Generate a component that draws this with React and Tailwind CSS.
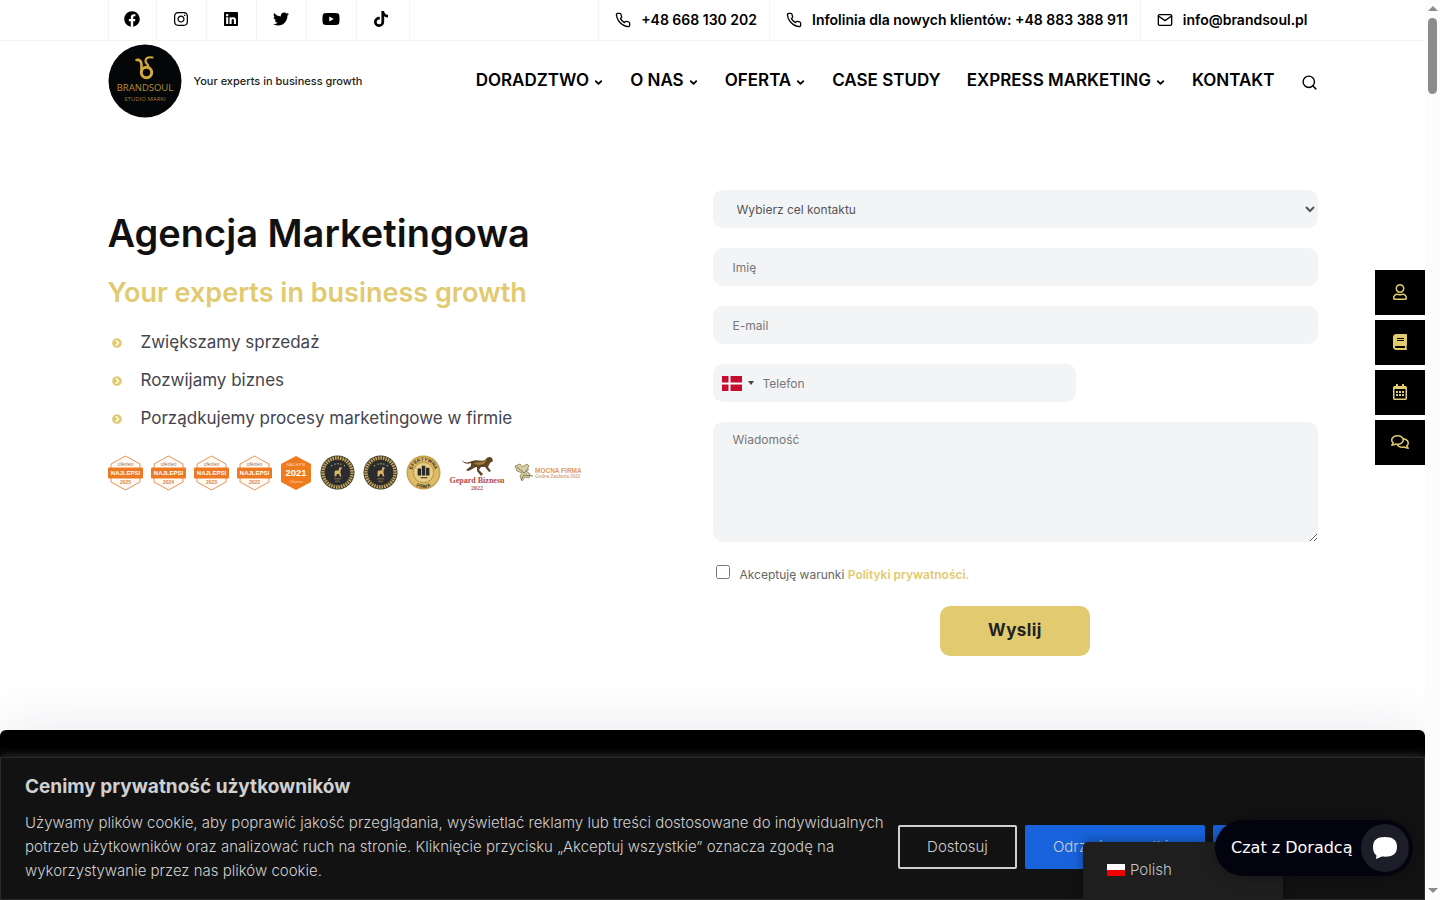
import React from 'react';
import { FaBook, FaChevronCircleRight, FaFacebook, FaInstagram, FaLinkedin, FaRegCalendarAlt, FaRegComments, FaRegUser, FaTiktok, FaTwitter, FaYoutube } from 'react-icons/fa';
import { FiChevronDown, FiMail, FiPhone, FiSearch } from 'react-icons/fi';

const socials = [
    { name: 'Facebook', icon: FaFacebook },
    { name: 'Instagram', icon: FaInstagram },
    { name: 'LinkedIn', icon: FaLinkedin },
    { name: 'Twitter', icon: FaTwitter },
    { name: 'YouTube', icon: FaYoutube },
    { name: 'TikTok', icon: FaTiktok },
];

const contacts = [
    { icon: FiPhone, text: '+48 668 130 202', href: 'tel:+48668130202' },
    { icon: FiPhone, text: 'Infolinia dla nowych klientów: +48 883 388 911', href: 'tel:+48883388911' },
    { icon: FiMail, text: 'info@brandsoul.pl', href: 'mailto:info@brandsoul.pl' },
];

const navItems = [
    { label: 'DORADZTWO', sub: true },
    { label: 'O NAS', sub: true },
    { label: 'OFERTA', sub: true },
    { label: 'CASE STUDY', sub: false },
    { label: 'EXPRESS MARKETING', sub: true },
    { label: 'KONTAKT', sub: false },
];

const benefits = ['Zwiększamy sprzedaż', 'Rozwijamy biznes', 'Porządkujemy procesy marketingowe w firmie'];

const sideLinks = [
    { name: 'Konto', icon: FaRegUser },
    { name: 'Blog', icon: FaBook },
    { name: 'Kalendarz', icon: FaRegCalendarAlt },
    { name: 'Kontakt', icon: FaRegComments },
];

const field = 'w-full rounded-[10px] bg-[#f3f4f6] text-xs text-[#555] placeholder:text-[#777] outline-none';

const Logo = () => (
    <svg viewBox="0 0 74 74" className="size-[74px] shrink-0" aria-label="Brandsoul Studio Marki">
        <circle cx="37" cy="37" r="36.500" fill="#040607" />
        <g fill="none" stroke="#d3a83f" strokeLinecap="round">
            <circle cx="38.500" cy="28.500" r="5.200" strokeWidth="3" />
            <path d="M28.500 16c3.500-.5 5 1.500 5 5v7" strokeWidth="2.600" />
            <path d="M44.500 13.500c-5-1-7 1-7 3.500s3 3 3 6" strokeWidth="2.200" />
        </g>
        <text x="37" y="47" textAnchor="middle" fontSize="9.500" fill="#b58f3a" fontFamily="Open Sans, sans-serif">BRANDSOUL</text>
        <text x="37" y="57" textAnchor="middle" fontSize="6" fill="#a07e33" fontFamily="Open Sans, sans-serif">STUDIO MARKI</text>
    </svg>
);

const HexBadge = ({ year }) => (
    <svg viewBox="0 0 35 36" className="h-9 w-[35px] shrink-0">
        <path d="M17.500 1 32 9v18L17.500 35 3 27V9z" fill="#fffaf4" stroke="#e9935a" strokeWidth="1" />
        <text x="17.500" y="11" textAnchor="middle" fontSize="5" fontStyle="italic" fill="#9a7460">oferteo</text>
        <rect x="0" y="12.500" width="35" height="11" rx="1" fill="#ed7a22" />
        <text x="17.500" y="20" textAnchor="middle" fontSize="6" fontWeight="700" fill="#fff">NAJLEPSI</text>
        <text x="17.500" y="29" textAnchor="middle" fontSize="5" fontWeight="700" fill="#d98746">{year}</text>
    </svg>
);

const SolidHexBadge = () => (
    <svg viewBox="0 0 32 36" className="h-9 w-8 shrink-0">
        <path d="M16 1 31 9v18L16 35 1 27V9z" fill="#f07b1d" />
        <text x="16" y="11" textAnchor="middle" fontSize="4" fill="#ffd9b5">NAJLEPSI</text>
        <text x="16" y="21" textAnchor="middle" fontSize="9.500" fontWeight="700" fill="#fff">2021</text>
        <text x="16" y="28" textAnchor="middle" fontSize="4" fill="#ffd9b5">Oferteo</text>
    </svg>
);

const DarkMedal = () => (
    <svg viewBox="0 0 36 36" className="size-[35px] shrink-0">
        <circle cx="18" cy="18" r="17.500" fill="#3a3524" />
        <circle cx="18" cy="18" r="15" fill="none" stroke="#c2a863" strokeWidth="3.500" strokeDasharray="1.6 1" />
        <circle cx="18" cy="18" r="12.500" fill="#2b2c30" />
        <path d="M11.500 11h1M15 9.500h1M18 9h1M21 9.500h1M24.500 11h1" stroke="#d9c48b" strokeWidth="1.300" />
        <path d="M15 22v-5l1-1h3l1-3.500h1.500l1.500 1-1.500 1-.5 3.500 1 4h-1.500l-1-2.500h-2l-1 2.500z" fill="#d8b566" />
        <path d="M14.500 24.500h7M15.500 27h5" stroke="#857445" strokeWidth="1" />
    </svg>
);

const GoldMedal = () => (
    <svg viewBox="0 0 36 36" className="size-[35px] shrink-0">
        <circle cx="18" cy="18" r="17.500" fill="#c7a14c" />
        <circle cx="18" cy="18" r="16" fill="#ddbb69" />
        <circle cx="18" cy="18" r="10.500" fill="#e9cd85" stroke="#b48e39" />
        <path id="medalTop" d="M6 18a12 12 0 0 1 24 0" fill="none" />
        <path id="medalBottom" d="M2 18a16 16 0 0 0 32 0" fill="none" />
        <text fontSize="5" fontWeight="700" fill="#3a3120" textAnchor="middle"><textPath href="#medalTop" startOffset="50%">EFEKTYWNA</textPath></text>
        <text fontSize="5" fontWeight="700" fill="#3a3120" textAnchor="middle"><textPath href="#medalBottom" startOffset="50%">FIRMA</textPath></text>
        <path d="M12 14h3.500v7H12zM16.300 11h3.500v10h-3.500zM20.600 13h3.500v8h-3.500zM15 23h7v1h-7z" fill="#2c2a26" />
    </svg>
);

const Gepard = () => (
    <svg viewBox="0 0 56 36" className="h-9 w-14 shrink-0">
        <path d="M12 5c4 3 7 3 11 1 5-2 9 1 13-1 2-3 5-4 7-2l1 3-3 2-2 4 3 4-2 1-4-5-4 0-2 3 4 4-2 2-4-5v-4c-3 0-5 3-9 4l-2-1 5-4 0-3c-4 2-7 0-10-3z" fill="#5f4524" />
        <path d="M24 8l9-1 5-3-3 5-6 1z" fill="#a17a3e" />
        <text x="28" y="28" textAnchor="middle" fontSize="8" fontWeight="700" fill="#b04a48" fontFamily="Liberation Serif, serif">Gepard Biznesu</text>
        <text x="28" y="35" textAnchor="middle" fontSize="6" fontWeight="700" fill="#a95b58" fontFamily="Liberation Serif, serif">2022</text>
    </svg>
);

const MocnaFirma = () => (
    <svg viewBox="0 0 68 36" className="h-9 w-[68px] shrink-0">
        <g fill="none" stroke="#a69062" strokeWidth="1">
            <path d="M2 11l5-2 2 3 5-3 2 2-3 5 4 3-1 4-4-1-3 4-2-5 2-3-5-2z" fill="#d8cbaa" />
            <path d="M4 12l7 6 5-4M8 25l3-5 9 1" stroke="#6f7d54" />
        </g>
        <text x="22" y="18" fontSize="6.500" fontWeight="700" fill="#e39a58">MOCNA FIRMA</text>
        <text x="22" y="23" fontSize="4.500" fontWeight="700" fill="#d9a887">Godna Zaufania 2022</text>
    </svg>
);

const TopBar = () => (
    <div className="border-b border-[#f7f4ec]">
        <div className="mx-auto flex h-10 max-w-[1210px] justify-between">
            <ul className="flex border-l border-[#f7f4ec]">
                {socials.map(({ name, icon: Icon }) => (
                    <li key={name} className="flex w-[50px] border-r border-[#f7f4ec] first:w-12 last:w-[53px] last:pr-[3px]">
                        <a href="#" aria-label={name} className="flex flex-1 items-center justify-center pb-[2px] text-black">
                            <Icon className="h-4 w-[18px]" />
                        </a>
                    </li>
                ))}
            </ul>
            <ul className="flex">
                {contacts.map(({ icon: Icon, text, href }) => (
                    <li key={text} className="flex border-l border-[#f7f4ec] pr-3 pl-4 last:pr-[10px]">
                        <a href={href} className="flex items-center gap-[10px] text-sm font-semibold whitespace-nowrap text-black">
                            <Icon className="size-4" />
                            {text}
                        </a>
                    </li>
                ))}
            </ul>
        </div>
    </div>
);

const Header = () => (
    <header className="mx-auto flex h-20 w-full max-w-[1210px] items-center justify-between">
        <a href="#" className="flex items-center gap-3 text-[11px] font-medium whitespace-nowrap text-[#222]">
            <Logo />
            Your experts in business growth
        </a>
        <nav className="flex items-center gap-[26px]">
            {navItems.map(({ label, sub }) => (
                <a key={label} href="#" className="flex items-center gap-1 text-[17px] font-semibold whitespace-nowrap text-black">
                    {label}
                    {sub && <FiChevronDown className="mt-[2px] size-[11px]" strokeWidth={4} />}
                </a>
            ))}
            <button type="button" aria-label="Szukaj" className="pt-[3px] text-black">
                <FiSearch className="size-[17px]" />
            </button>
        </nav>
    </header>
);

const Intro = () => (
    <div className="pt-4">
        <h1 className="pt-1 text-[38px] leading-[46px] font-semibold whitespace-nowrap text-[#111]">Agencja Marketingowa</h1>
        <h2 className="mt-[21px] text-[27px] leading-8 font-semibold whitespace-nowrap text-[#e2ca70]">Your experts in business growth</h2>
        <ul className="mt-[15px]">
            {benefits.map((text) => (
                <li key={text} className="flex h-[38px] items-center gap-[19px] pl-1 text-[17px] text-[#44444f]">
                    <FaChevronCircleRight className="size-[10px] text-[#e2ca70]" />
                    {text}
                </li>
            ))}
        </ul>
        <div className="mt-[17px] flex gap-2 font-['Liberation_Sans',sans-serif]">
            <HexBadge year="2025" />
            <HexBadge year="2024" />
            <HexBadge year="2023" />
            <HexBadge year="2022" />
            <SolidHexBadge />
            <DarkMedal />
            <DarkMedal />
            <GoldMedal />
            <Gepard />
            <MocnaFirma />
        </div>
    </div>
);

const ContactForm = () => (
    <form className="flex flex-col gap-5" onSubmit={(e) => e.preventDefault()}>
        <select aria-label="Wybierz cel kontaktu" className={`${field} h-[38px] pl-5`}>
            <option>Wybierz cel kontaktu</option>
        </select>
        <input type="text" aria-label="Imię" placeholder="Imię" className={`${field} h-[38px] px-5`} />
        <input type="email" aria-label="E-mail" placeholder="E-mail" className={`${field} h-[38px] px-5`} />
        <div className="flex h-[38px] w-3/5 items-center rounded-[10px] bg-[#f3f4f6] pl-[9px]">
            <button type="button" aria-label="Kraj" className="flex items-center gap-[6px]">
                <svg viewBox="0 0 20 15" className="h-[15px] w-5">
                    <rect width="20" height="15" fill="#c60c30" />
                    <path d="M7.500 0v15M0 7.500h20" stroke="#fff" strokeWidth="2" />
                </svg>
                <span className="border-x-[3px] border-t-4 border-x-transparent border-t-[#444]"></span>
            </button>
            <input type="tel" aria-label="Telefon" placeholder="Telefon" className={`${field} h-full pl-[9px]`} />
        </div>
        <textarea aria-label="Wiadomość" placeholder="Wiadomość" className={`${field} block h-[120px] px-5 py-[10px]`}></textarea>
        <div className="flex h-6 items-center gap-[10px] pl-[3px] text-xs text-[#666]">
            <input id="privacy" type="checkbox" className="mb-1 size-[14px]" />
            <label htmlFor="privacy" className="pt-[2px]">
                Akceptuję warunki <a href="#" className="font-semibold text-[#e2ca70]">Polityki prywatności.</a>
            </label>
        </div>
        <button type="submit" className="h-[50px] w-[150px] self-center rounded-[10px] bg-[#e2ca70] text-[17px] font-bold tracking-wide text-[#222]">
            Wyslij
        </button>
    </form>
);

const SideMenu = () => (
    <div className="absolute top-[270px] right-0 flex flex-col gap-[5px]">
        {sideLinks.map(({ name, icon: Icon }) => (
            <a key={name} href="#" aria-label={name} className="flex h-[45px] w-[50px] items-center justify-center bg-black pb-px text-[#e2ca70]">
                <Icon className="h-4 w-[18px]" />
            </a>
        ))}
    </div>
);

const CookieBar = () => (
    <section className="absolute inset-x-0 bottom-0 flex items-center justify-between border border-[#2a2a2a] bg-[#121212] px-6 pt-4 pb-4 text-[#d0d0d0] shadow-[0_-1px_10px_0_rgba(172,171,171,0.3)]">
        <div className="min-w-0 flex-1">
            <h3 className="text-[19px] leading-[26px] font-bold">Cenimy prywatność użytkowników</h3>
            <p className="mt-[11px] text-[15px] leading-6 font-light">
                Używamy plików cookie, aby poprawić jakość przeglądania, wyświetlać reklamy lub treści dostosowane do indywidualnych
                potrzeb użytkowników oraz analizować ruch na stronie. Kliknięcie przycisku „Akceptuj wszystkie” oznacza zgodę na
                wykorzystywanie przez nas plików cookie.
            </p>
        </div>
        <div className="mt-9 flex shrink-0 gap-2 text-[15px] font-light">
            <button type="button" className="h-11 w-[119px] rounded-[2px] border-2 border-[#d0d0d0] pt-[2px]">Dostosuj</button>
            <button type="button" className="h-11 w-[180px] rounded-[2px] bg-[#1863dc] pt-[2px]">Odrzuć wszystkie</button>
            <button type="button" aria-label="Akceptuj wszystkie" className="h-11 w-[187px] rounded-[2px] bg-[#1863dc]"></button>
        </div>
    </section>
);

const LanguageSwitcher = () => (
    <button type="button" className="absolute right-[142px] bottom-0 flex h-[58px] w-[200px] items-center gap-[5px] rounded-t-[5px] bg-[#1e1e1e] pb-[2px] pl-6 text-[15px] font-light text-[#c4c4c4] shadow-[0_0_12px_rgba(0,0,0,0.4)]">
        <svg viewBox="0 0 18 12" className="h-3 w-[18px]">
            <rect width="18" height="6" fill="#fff" />
            <rect y="6" width="18" height="6" fill="#f00000" />
        </svg>
        Polish
    </button>
);

const ChatButton = () => (
    <button type="button" className="absolute right-3 bottom-6 flex h-14 w-[198px] items-center justify-between rounded-full bg-[#02030f] pr-1 pl-4 font-['DejaVu_Sans',sans-serif] text-base text-white shadow-[0_0_16px_rgba(0,0,0,0.3)]">
        Czat z Doradcą
        <span className="flex size-12 items-center justify-center rounded-full bg-[#1c1d28]">
            <svg viewBox="0 0 26 24" className="h-6 w-[26px]" fill="#fff">
                <path d="M13 1C5 1 1 4 1 11c0 4 1 6.500 3.500 8.500L4 23l6-2.500c9 .8 15-1.500 15-9.500C25 4 21 1 13 1z" />
            </svg>
        </span>
    </button>
);

const Scrollbar = () => (
    <div className="flex w-[15px] shrink-0 flex-col items-center justify-between bg-[#fcfcfc] pt-[6px] pb-[7px]">
        <div className="flex flex-col items-center gap-[7px]">
            <span className="border-x-[5px] border-b-[5px] border-x-transparent border-b-[#8b8b8b]"></span>
            <span className="h-[76px] w-[9px] rounded-full bg-[#8b8b8b]"></span>
        </div>
        <span className="border-x-[5px] border-t-[5px] border-x-transparent border-t-[#8b8b8b]"></span>
    </div>
);

const App = () => (
    <div className="flex h-screen overflow-hidden bg-white font-['Inter',sans-serif]">
        <div className="relative flex min-w-0 flex-1 flex-col overflow-hidden">
            <TopBar />
            <Header />
            <main className="flex flex-1 flex-col">
                <div className="mx-auto grid w-full max-w-[1210px] grid-cols-2 pt-[69px] pb-[74px]">
                    <Intro />
                    <ContactForm />
                </div>
                <div className="flex-1 rounded-t-[6px] bg-black shadow-[0_0_60px_rgba(30,30,80,0.1)]"></div>
            </main>
            <SideMenu />
            <CookieBar />
            <LanguageSwitcher />
            <ChatButton />
        </div>
        <Scrollbar />
    </div>
);

export default App;
